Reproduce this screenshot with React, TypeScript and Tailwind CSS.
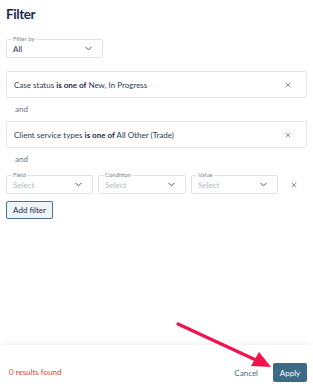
import { ChevronDown, X } from "lucide-react";

const font = { fontFamily: 'Lato, "Open Sans", sans-serif' };

function OutlinedSelect({
    label,
    value,
    placeholder,
    className,
}: {
    label: string;
    value?: string;
    placeholder?: string;
    className?: string;
}) {
    return (
        <div
            className={`relative flex h-[19px] items-center justify-between rounded-[2px] border border-[#dfe3ea] bg-white pl-[6px] pr-[8px] ${className ?? ""}`}
        >
            <span className="absolute left-[5px] top-[-5px] bg-white px-[1px] text-[6px] leading-[7px] text-[#7a8699]">
                {label}
            </span>
            {value ? (
                <span className="text-[8px] leading-none text-[#1f2d44]">{value}</span>
            ) : (
                <span className="text-[8px] leading-none text-[#b3bac6]">{placeholder}</span>
            )}
            <ChevronDown className="h-[11px] w-[11px] text-[#3a4657]" strokeWidth={2} />
        </div>
    );
}

function Condition({ field, values }: { field: string; values: string }) {
    return (
        <div className="flex h-[27px] items-center justify-between rounded-[2px] border border-[#e3e6eb] bg-white pl-[7px] pr-[14px]">
            <p className="text-[8px] text-[#2b3a52]">
                {field} <span className="font-bold text-[#1c2a44]">is one of</span> {values}
            </p>
            <X className="h-[8px] w-[8px] text-[#4a5668]" strokeWidth={2} />
        </div>
    );
}

export default function App() {
    return (
        <div className="relative flex h-[388px] w-[313px] flex-col bg-white" style={font}>
            <div className="flex-1 px-[6px]">
                <h1 className="pt-[5px] text-[13.5px] font-bold leading-[18px] tracking-[-0.4px] text-[#1a2b4c]">
                    Filter
                </h1>

                <OutlinedSelect label="Filter by" value="All" className="mt-[16px] w-[97px]" />

                <div className="mt-[13px]">
                    <Condition field="Case status" values="New, In Progress" />
                </div>
                <p className="py-[5px] pl-[9px] text-[8px] leading-[13px] text-[#6b7585]">and</p>
                <Condition field="Client service types" values="All Other (Trade)" />
                <p className="py-[5px] pl-[9px] text-[8px] leading-[13px] text-[#6b7585]">and</p>

                <div className="mt-[4px] flex items-center gap-[5px]">
                    <OutlinedSelect label="Field" placeholder="Select" className="w-[87px]" />
                    <OutlinedSelect label="Condition" placeholder="Select" className="w-[88px]" />
                    <OutlinedSelect label="Value" placeholder="Select" className="w-[87px]" />
                    <X className="ml-[7px] h-[8px] w-[8px] text-[#4a5668]" strokeWidth={2} />
                </div>

                <button className="mt-[7px] flex h-[18px] w-[47px] items-center justify-center rounded-[2px] border border-[#4d7389] bg-[#eef3f6] text-[8px] text-[#1f2d44]">
                    Add filter
                </button>
            </div>

            <div className="flex h-[43px] items-end justify-between pb-[6px] pl-[9px] pr-[6px] shadow-[0_-4px_6px_-2px_rgba(0,0,0,0.06)]">
                <span className="mb-[5px] text-[8px] leading-[9px] text-[#d8472d]">0 results found</span>
                <div className="flex items-center gap-[15px]">
                    <span className="text-[8px] text-[#3f6a85]">Cancel</span>
                    <button className="flex h-[19px] w-[34px] items-center justify-center rounded-[2px] bg-[#3b6b86] text-[8px] text-white">
                        Apply
                    </button>
                </div>
            </div>

            <svg
                className="pointer-events-none absolute left-0 top-0"
                width="313"
                height="388"
                viewBox="0 0 313 388"
            >
                <line x1="178" y1="324" x2="258" y2="361" stroke="#f0134d" strokeWidth="3.2" strokeLinecap="round" />
                <polygon points="271,367 251,366 259,352" fill="#f0134d" />
            </svg>
        </div>
    );
}
